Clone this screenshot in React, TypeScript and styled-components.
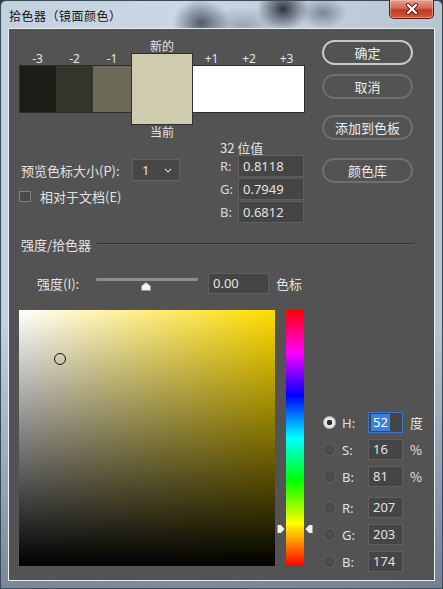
import React from 'react';
import styled, { createGlobalStyle } from 'styled-components';

const GlobalStyle = createGlobalStyle`
  html, body {
    margin: 0;
    padding: 0;
    background: #2f3e4e;
  }
  body {
    font-family: 'Noto Sans', 'Noto Sans CJK SC', sans-serif;
  }
`;

const leftSteps = [
  { label: '-3', color: '#1c1c18', width: 37 },
  { label: '-2', color: '#35352b', width: 37 },
  { label: '-1', color: '#6c6b59', width: 38 },
];

const rightSteps = [
  { label: '+1', color: '#ffffff', width: 37 },
  { label: '+2', color: '#ffffff', width: 38 },
  { label: '+3', color: '#ffffff', width: 37 },
];

const bitValues = [
  { label: 'R:', value: '0.8118' },
  { label: 'G:', value: '0.7949' },
  { label: 'B:', value: '0.6812' },
];

const hsbFields = [
  { key: 'H', label: 'H:', value: '52', unit: '度', checked: true },
  { key: 'S', label: 'S:', value: '16', unit: '%' },
  { key: 'Bh', label: 'B:', value: '81', unit: '%' },
];

const rgbFields = [
  { key: 'R', label: 'R:', value: '207' },
  { key: 'G', label: 'G:', value: '203' },
  { key: 'Bb', label: 'B:', value: '174' },
];

const hue = 52;
const saturation = 16;
const brightness = 81;

const App: React.FC = () => {
  return (
    <>
      <GlobalStyle />
      <Window>
        <TitleBar>
          <Title>拾色器（镜面颜色）</Title>
          <CloseButton>
            <svg width="16" height="12" viewBox="0 0 16 12">
              <path d="M4 2 L12 10 M12 2 L4 10" stroke="#5a1a10" strokeWidth="4" strokeLinecap="round" />
              <path d="M4 2 L12 10 M12 2 L4 10" stroke="#ffffff" strokeWidth="2.2" strokeLinecap="round" />
            </svg>
          </CloseButton>
        </TitleBar>

        <Client>
          <TopSection>
            <LeftTop>
              <SwatchRow>
                <SideGroup>
                  {leftSteps.map((s, i) => (
                    <StepColumn key={s.label} $width={s.width}>
                      <StepLabel>{s.label}</StepLabel>
                      <StepBox $color={s.color} $first={i === 0} />
                    </StepColumn>
                  ))}
                </SideGroup>
                <CenterGroup>
                  <StepLabel>新的</StepLabel>
                  <CurrentBox />
                  <StepLabel>当前</StepLabel>
                </CenterGroup>
                <SideGroup>
                  {rightSteps.map((s, i) => (
                    <StepColumn key={s.label} $width={s.width}>
                      <StepLabel>{s.label}</StepLabel>
                      <StepBox $color={s.color} $last={i === rightSteps.length - 1} />
                    </StepColumn>
                  ))}
                </SideGroup>
              </SwatchRow>

              <OptionsRow>
                <LeftOptions>
                  <SelectRow>
                    <OptionLabel>预览色标大小(P):</OptionLabel>
                    <Select>
                      <span>1</span>
                      <svg width="8" height="5" viewBox="0 0 8 5">
                        <path d="M1 1 L4 4 L7 1" stroke="#cfcfcf" strokeWidth="1.1" fill="none" />
                      </svg>
                    </Select>
                  </SelectRow>
                  <CheckRow>
                    <CheckBox />
                    <span>相对于文档(E)</span>
                  </CheckRow>
                </LeftOptions>

                <ValueBlock>
                  <ValueTitle>32 位值</ValueTitle>
                  {bitValues.map((v) => (
                    <ValueRow key={v.label}>
                      <ValueLabel>{v.label}</ValueLabel>
                      <ValueInput>{v.value}</ValueInput>
                    </ValueRow>
                  ))}
                </ValueBlock>
              </OptionsRow>
            </LeftTop>

            <ButtonColumn>
              <PillButton $primary>确定</PillButton>
              <PillButton $gap={9}>取消</PillButton>
              <PillButton $gap={16}>添加到色板</PillButton>
              <PillButton $gap={18}>颜色库</PillButton>
            </ButtonColumn>
          </TopSection>

          <SectionHeader>
            <span>强度/拾色器</span>
            <SectionLine />
          </SectionHeader>

          <SliderRow>
            <SliderLabel>强度(I):</SliderLabel>
            <Track>
              <Thumb>
                <svg width="10" height="9" viewBox="0 0 10 9">
                  <path d="M5 0.5 L9.5 4 L9.5 8.5 L0.5 8.5 L0.5 4 Z" fill="#f4f4f4" stroke="#9a9a9a" strokeWidth="0.8" />
                </svg>
              </Thumb>
            </Track>
            <SliderInput>0.00</SliderInput>
            <SliderUnit>色标</SliderUnit>
          </SliderRow>

          <PickerSection>
            <ColorField>
              <Marker
                style={{
                  left: (saturation / 100) * 256 - 6,
                  top: (1 - brightness / 100) * 256 - 6,
                }}
              />
            </ColorField>
            <HueBar>
              <HueArrow $side="left" style={{ top: 256 - (hue / 360) * 256 - 5 }}>
                <svg width="8" height="10" viewBox="0 0 8 10">
                  <path d="M0.5 1 L4 1 L7.5 5 L4 9 L0.5 9 Z" fill="#f0f0f0" />
                </svg>
              </HueArrow>
              <HueArrow $side="right" style={{ top: 256 - (hue / 360) * 256 - 5 }}>
                <svg width="8" height="10" viewBox="0 0 8 10">
                  <path d="M7.5 1 L4 1 L0.5 5 L4 9 L7.5 9 Z" fill="#f0f0f0" />
                </svg>
              </HueArrow>
            </HueBar>

            <RadioList>
              {hsbFields.map((f) => (
                <RadioRow key={f.key}>
                  <Radio $checked={!!f.checked} />
                  <RadioLabel>{f.label}</RadioLabel>
                  <NumInput $focused={!!f.checked}>
                    {f.checked ? <Selected>{f.value}</Selected> : f.value}
                  </NumInput>
                  <Unit>{f.unit}</Unit>
                </RadioRow>
              ))}
              <RadioGap />
              {rgbFields.map((f) => (
                <RadioRow key={f.key}>
                  <Radio $checked={false} />
                  <RadioLabel>{f.label}</RadioLabel>
                  <NumInput $focused={false}>{f.value}</NumInput>
                </RadioRow>
              ))}
            </RadioList>
          </PickerSection>
        </Client>
      </Window>
    </>
  );
};

export default App;

const Window = styled.div`
  position: relative;
  width: 443px;
  height: 589px;
  box-sizing: border-box;
  padding: 0 8px 8px 8px;
  border: 1px solid #3a4a5a;
  border-radius: 6px 6px 0 0;
  background:
    radial-gradient(ellipse 28px 24px at 200px 22px, rgba(60, 68, 80, 0.85), transparent),
    radial-gradient(ellipse 26px 22px at 282px 8px, rgba(30, 36, 44, 0.9), transparent),
    radial-gradient(ellipse 40px 18px at 240px 24px, rgba(120, 130, 140, 0.55), transparent),
    radial-gradient(ellipse 24px 16px at 322px 12px, rgba(95, 105, 118, 0.7), transparent),
    linear-gradient(to bottom, transparent 55%, rgba(30, 45, 62, 0.45)),
    linear-gradient(to right, #c3d1de, #cbd7e3 40%, #b7c5d3);
  display: flex;
  flex-direction: column;
  font-size: 13px;
`;

const TitleBar = styled.div`
  height: 28px;
  display: flex;
  justify-content: space-between;
  align-items: flex-start;
`;

const Title = styled.div`
  margin-top: 6px;
  font-family: 'Noto Sans CJK SC', sans-serif;
  font-size: 12px;
  letter-spacing: 0.5px;
  line-height: 17px;
  color: #141414;
`;

const CloseButton = styled.div`
  width: 45px;
  height: 19px;
  margin-top: -1px;
  box-sizing: border-box;
  border: 1px solid #5e1b12;
  border-top: none;
  border-radius: 0 0 5px 5px;
  background: linear-gradient(to bottom, #e6a090 0%, #d26a55 45%, #c13a22 55%, #cf5a3a 100%);
  box-shadow: inset 0 0 0 1px rgba(255, 210, 200, 0.45);
  display: flex;
  align-items: center;
  justify-content: center;
`;

const Client = styled.div`
  flex: 1;
  background: #535353;
  box-sizing: border-box;
  padding: 11px 10px 0 10px;
  outline: 1px solid #e8eef4;
  color: #e2e2e2;
  font-family: 'Noto Sans CJK SC', sans-serif;
`;

const TopSection = styled.div`
  display: flex;
  align-items: flex-start;
`;

const LeftTop = styled.div`
  width: 286px;
  display: flex;
  flex-direction: column;
`;

const SwatchRow = styled.div`
  display: flex;
  align-items: flex-start;
`;

const SideGroup = styled.div`
  display: flex;
  margin-top: 12px;
`;

const StepColumn = styled.div<{ $width: number }>`
  width: ${(p) => p.$width}px;
  display: flex;
  flex-direction: column;
  align-items: center;
`;

const StepLabel = styled.div`
  height: 13px;
  line-height: 13px;
  font-size: 12px;
  font-family: 'Noto Sans', 'Noto Sans CJK SC', sans-serif;
  color: #e4e4e4;
`;

const StepBox = styled.div<{ $color: string; $first?: boolean; $last?: boolean }>`
  align-self: stretch;
  height: 48px;
  box-sizing: border-box;
  background: ${(p) => p.$color};
  border-top: 1px solid #2c2c2c;
  border-bottom: 1px solid #2c2c2c;
  border-left: ${(p) => (p.$first ? '1px solid #2c2c2c' : 'none')};
  border-right: ${(p) => (p.$last ? '1px solid #2c2c2c' : 'none')};
`;

const CenterGroup = styled.div`
  width: 62px;
  display: flex;
  flex-direction: column;
  align-items: center;
`;

const CurrentBox = styled.div`
  align-self: stretch;
  height: 72px;
  box-sizing: border-box;
  background: #cfcbae;
  border: 1px solid #2e2e2a;
  margin-bottom: 1px;
`;

const OptionsRow = styled.div`
  display: flex;
  justify-content: space-between;
  margin-top: 2px;
`;

const LeftOptions = styled.div`
  display: flex;
  flex-direction: column;
  padding-top: 18px;
`;

const SelectRow = styled.div`
  display: flex;
  align-items: center;
  height: 22px;
`;

const OptionLabel = styled.span`
  width: 113px;
  padding-left: 2px;
  box-sizing: border-box;
  white-space: nowrap;
`;

const Select = styled.div`
  width: 48px;
  height: 22px;
  box-sizing: border-box;
  background: #474747;
  border: 1px solid #626262;
  display: flex;
  align-items: center;
  justify-content: space-between;
  padding: 0 7px 0 9px;
  font-family: 'Noto Sans', sans-serif;
  font-size: 13px;
`;

const CheckRow = styled.div`
  display: flex;
  align-items: center;
  gap: 9px;
  margin-top: 8px;
  height: 14px;
`;

const CheckBox = styled.div`
  width: 12px;
  height: 11px;
  box-sizing: border-box;
  border: 1px solid #808080;
  background: #4a4a4a;
`;

const ValueBlock = styled.div`
  width: 85px;
  display: flex;
  flex-direction: column;
  gap: 1px;
`;

const ValueTitle = styled.div`
  height: 13px;
  line-height: 13px;
  white-space: nowrap;
`;

const ValueRow = styled.div`
  display: flex;
  align-items: center;
  height: 22px;
`;

const ValueLabel = styled.span`
  width: 18px;
  font-family: 'Noto Sans', sans-serif;
  font-size: 13px;
  color: #d8d8d8;
`;

const ValueInput = styled.div`
  width: 66px;
  height: 22px;
  box-sizing: border-box;
  background: #454545;
  border: 1px solid #5f5f5f;
  padding-left: 4px;
  line-height: 20px;
  font-family: 'Noto Sans', sans-serif;
  font-size: 13px;
`;

const ButtonColumn = styled.div`
  margin-left: 17px;
  width: 91px;
  display: flex;
  flex-direction: column;
`;

const PillButton = styled.div<{ $primary?: boolean; $gap?: number }>`
  height: 25px;
  margin-top: ${(p) => p.$gap ?? 0}px;
  box-sizing: border-box;
  border-radius: 13px;
  border: ${(p) => (p.$primary ? '2px solid #c9c9c9' : '2px solid #6f6f6f')};
  display: flex;
  align-items: center;
  justify-content: center;
  font-size: 13px;
  color: #ececec;
`;

const SectionHeader = styled.div`
  display: flex;
  align-items: center;
  margin-top: 14px;
  height: 14px;
  padding-left: 2px;
  padding-right: 10px;
  white-space: nowrap;
`;

const SectionLine = styled.div`
  flex: 1;
  margin-left: 6px;
  height: 0;
  border-top: 1px solid #353535;
  border-bottom: 1px solid #5c5c5c;
`;

const SliderRow = styled.div`
  display: flex;
  align-items: center;
  height: 22px;
  margin-top: 21px;
  padding-left: 18px;
`;

const SliderLabel = styled.span`
  width: 59px;
  white-space: nowrap;
`;

const Track = styled.div`
  position: relative;
  width: 102px;
  height: 3px;
  margin-top: -8px;
  background: #8d8d8d;
  border-radius: 1px;
`;

const Thumb = styled.div`
  position: absolute;
  left: 45px;
  top: 4px;
  width: 10px;
  height: 9px;
  display: flex;
`;

const SliderInput = styled.div`
  margin-left: 10px;
  width: 61px;
  height: 21px;
  box-sizing: border-box;
  background: #454545;
  border: 1px solid #5f5f5f;
  padding-left: 4px;
  line-height: 19px;
  font-family: 'Noto Sans', sans-serif;
  font-size: 13px;
`;

const SliderUnit = styled.span`
  margin-left: 7px;
`;

const PickerSection = styled.div`
  display: flex;
  align-items: flex-start;
  margin-top: 16px;
`;

const ColorField = styled.div`
  position: relative;
  width: 256px;
  height: 256px;
  flex-shrink: 0;
  background:
    linear-gradient(to top, #000, rgba(0, 0, 0, 0)),
    linear-gradient(to right, #fff, rgb(255, 221, 0));
`;

const Marker = styled.div`
  position: absolute;
  width: 12px;
  height: 12px;
  box-sizing: border-box;
  border: 1px solid #111;
  border-radius: 50%;
`;

const HueBar = styled.div`
  position: relative;
  margin-left: 11px;
  width: 18px;
  height: 256px;
  flex-shrink: 0;
  background: linear-gradient(
    to bottom,
    #ff0000 0%,
    #ff00ff 16.67%,
    #0000ff 33.33%,
    #00ffff 50%,
    #00ff00 66.67%,
    #ffff00 83.33%,
    #ff0000 100%
  );
`;

const HueArrow = styled.div<{ $side: 'left' | 'right' }>`
  position: absolute;
  ${(p) => (p.$side === 'left' ? 'left: -9px;' : 'right: -9px;')}
  width: 8px;
  height: 10px;
  display: flex;
`;

const RadioList = styled.div`
  margin-left: 19px;
  padding-top: 99px;
  display: flex;
  flex-direction: column;
`;

const RadioRow = styled.div`
  display: flex;
  align-items: center;
  height: 27px;
`;

const RadioGap = styled.div`
  height: 4px;
`;

const Radio = styled.div<{ $checked: boolean }>`
  width: 13px;
  height: 13px;
  box-sizing: border-box;
  border-radius: 50%;
  border: 1px solid ${(p) => (p.$checked ? '#bdbdbd' : '#626262')};
  background: ${(p) =>
    p.$checked
      ? 'radial-gradient(circle, #2e2e2e 0 2.5px, #e4e4e4 3px)'
      : 'radial-gradient(circle at 50% 40%, #505050, #454545)'};
`;

const RadioLabel = styled.span`
  width: 26px;
  margin-left: 6px;
  font-family: 'Noto Sans', sans-serif;
  font-size: 13px;
  color: #e0e0e0;
`;

const NumInput = styled.div<{ $focused: boolean }>`
  width: 35px;
  height: 21px;
  box-sizing: border-box;
  background: #454545;
  border: 1px solid ${(p) => (p.$focused ? '#3b78c4' : '#5f5f5f')};
  padding-left: ${(p) => (p.$focused ? '2px' : '4px')};
  line-height: 19px;
  font-family: 'Noto Sans', sans-serif;
  font-size: 13px;
  display: flex;
  align-items: center;
`;

const Selected = styled.span`
  background: #3c7fdc;
  color: #ffffff;
  padding: 0 2px;
  line-height: 17px;
`;

const Unit = styled.span`
  margin-left: 7px;
`;
